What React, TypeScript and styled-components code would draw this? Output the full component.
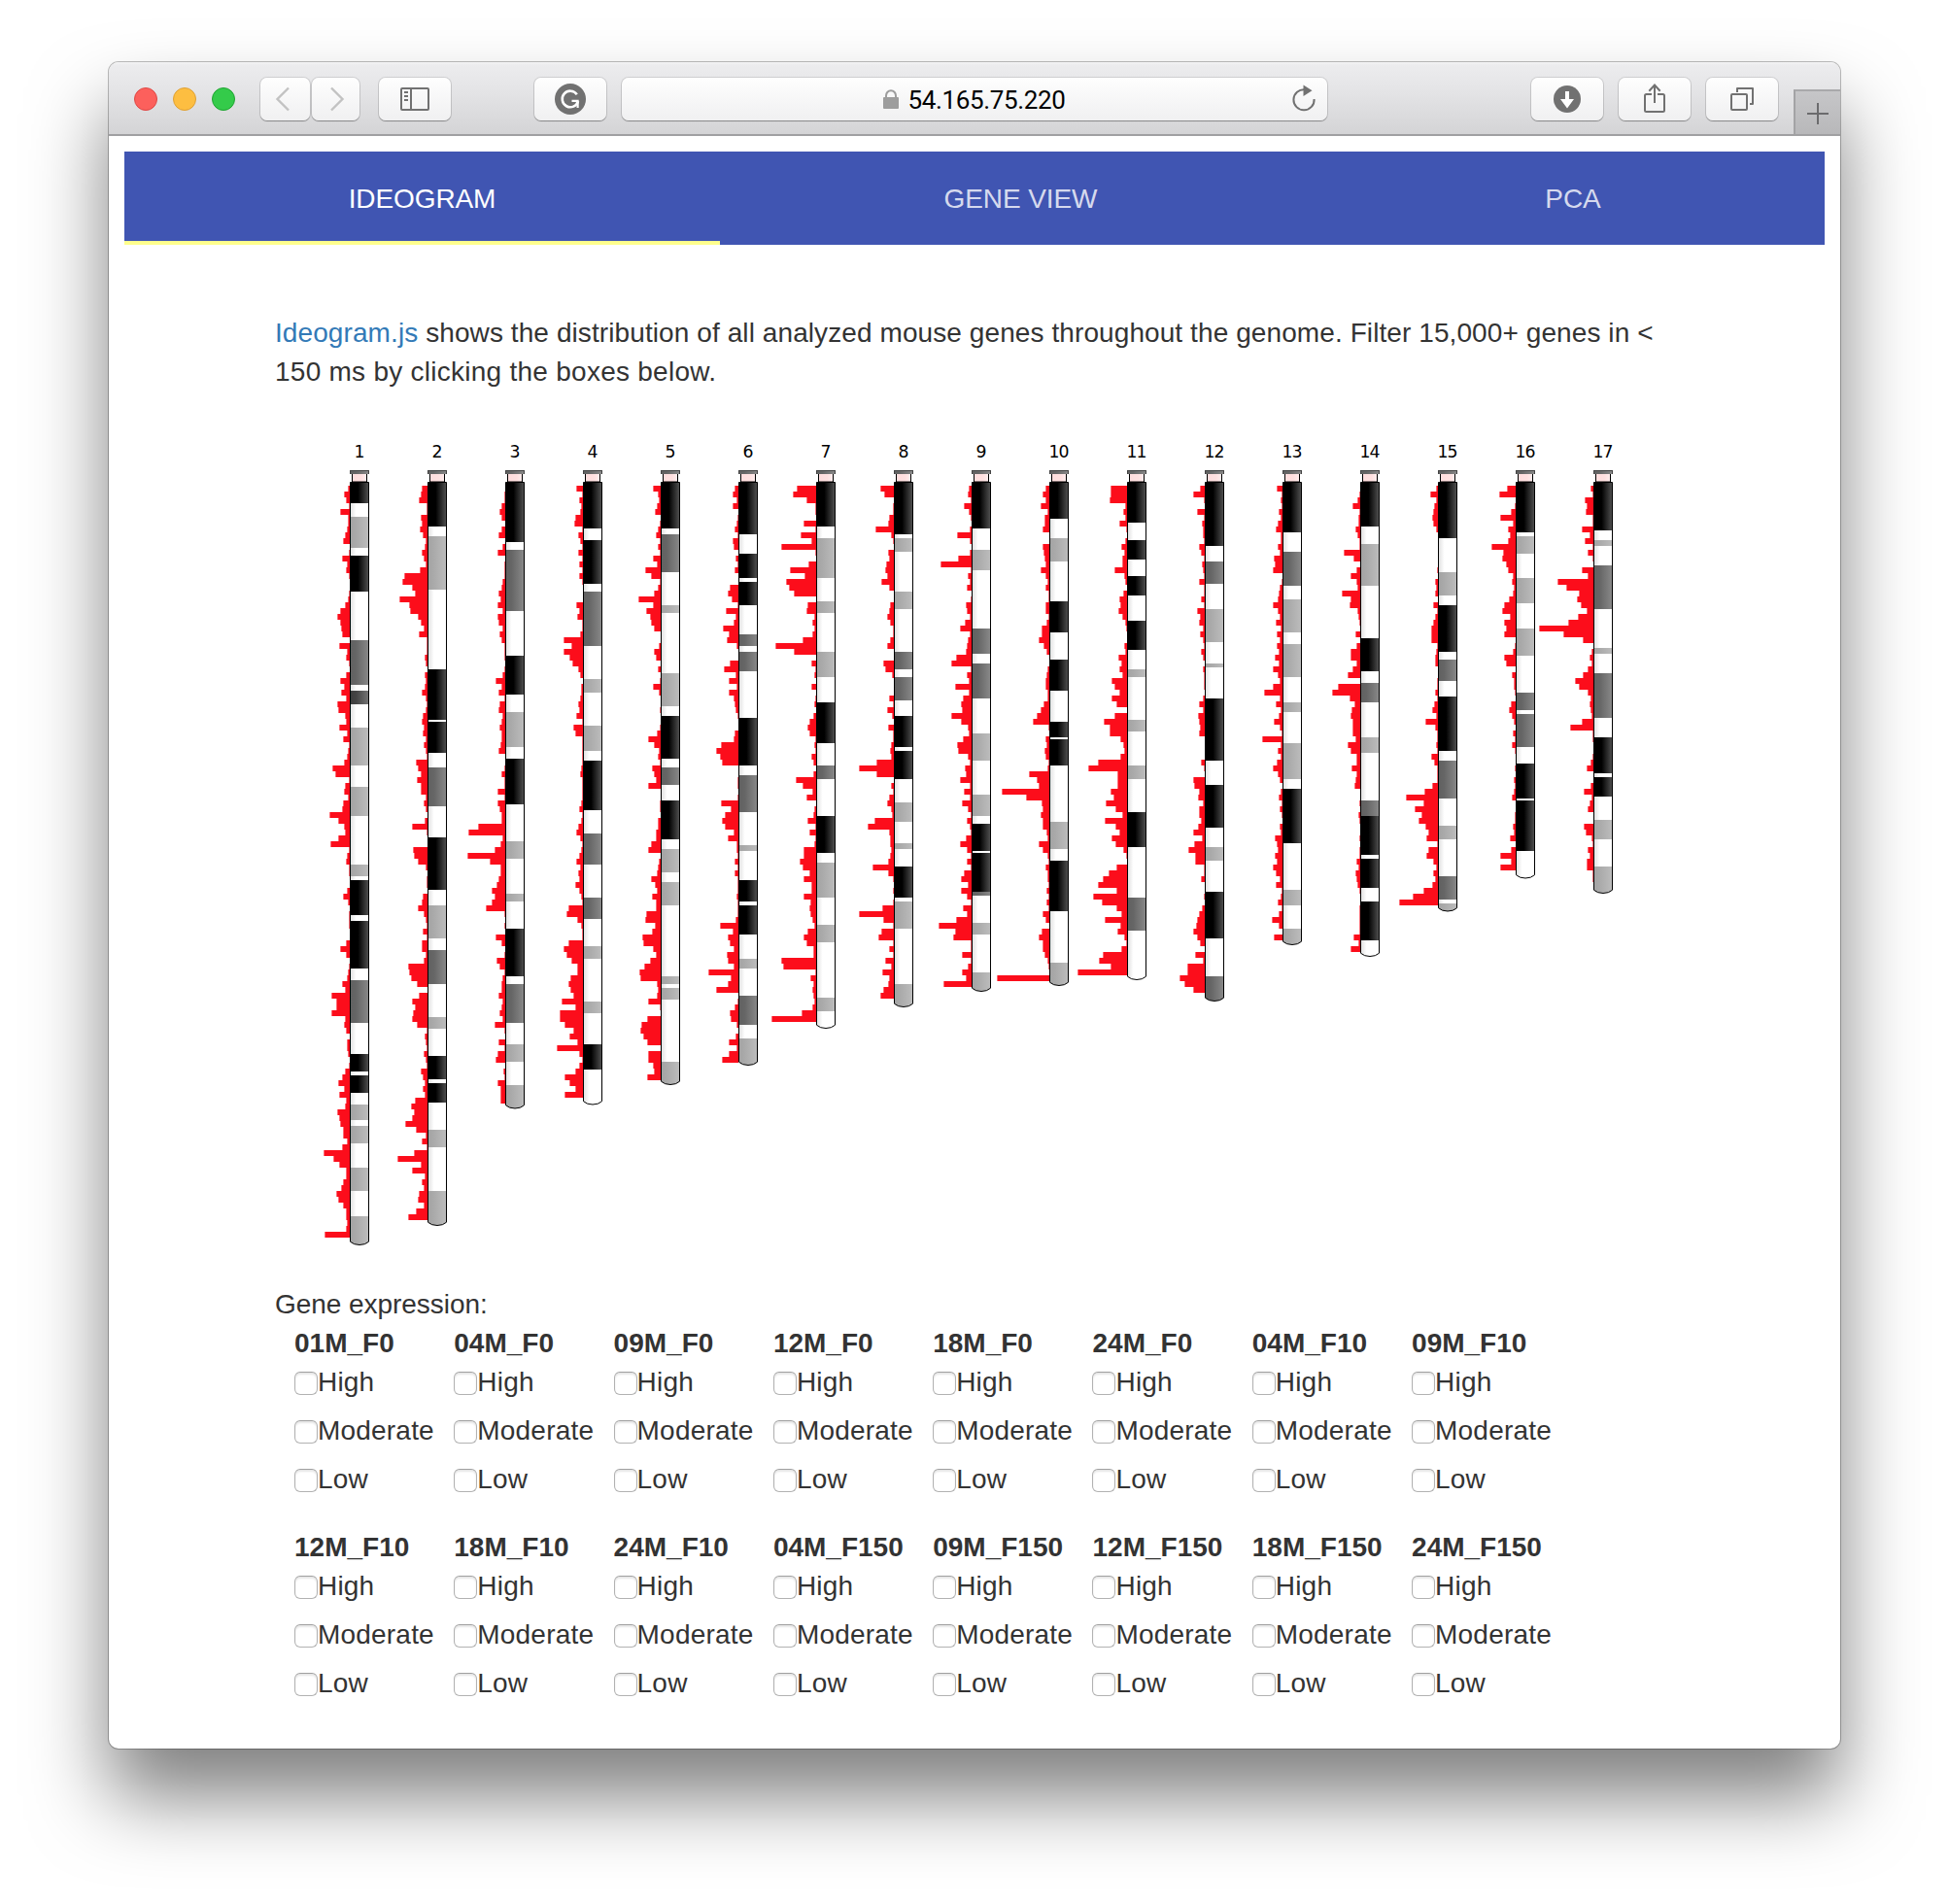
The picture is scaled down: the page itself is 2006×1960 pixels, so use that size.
import React from "react";
import styled, { createGlobalStyle } from "styled-components";

const GlobalStyle = createGlobalStyle`
  *, *::before, *::after { box-sizing: border-box; }
  html, body { margin: 0; padding: 0; background: #fff; overflow: hidden; }
`;

/* ---------- chromosome data ---------- */

type Chromosome = {
  name: string;
  /* band coordinates per pixel */
  scale: number;
  start: number;
  /* stain letter followed by the coordinate where the band ends */
  bands: string;
  /* gene counts in consecutive bins */
  genes: string;
};

const CHROMOSOMES: Chromosome[] = [
  {
    name: "1", scale: 3, start: 168,
    bands: "k234 w276 g372 w396 k507 w657 m795 w813 d855 w927 g1044 w1110 g1200 w1350 g1386 w1398 k1506 w1524 k1671 w1707 m1839 w1935 k1989 w2001 k2055 w2091 g2139 w2157 g2211 w2286 g2358 w2436 g2525",
    genes: "2 6 4 1 10 2 2 3 5 7 0 1 8 3 4 1 0 0 1 2 5 10 13 10 9 8 0 11 3 4 1 0 4 10 6 9 4 13 12 5 4 11 3 7 1 2 3 6 18 15 1 5 6 2 7 8 21 12 6 5 12 20 1 3 4 1 1 0 0 3 7 2 0 1 1 1 0 0 4 10 4 0 1 2 3 8 5 19 14 14 19 5 6 4 0 3 3 2 0 1 5 8 12 6 11 4 5 13 11 10 7 7 3 8 27 17 11 4 4 7 9 14 12 7 4 4 3 4 26",
  },
  {
    name: "2", scale: 3, start: 168,
    bands: "k306 w336 g501 w747 k903 w909 k1005 w1050 m1170 w1266 k1428 w1476 g1578 w1614 m1719 w1821 g1857 w1941 k2013 w2025 k2085 w2169 g2223 w2358 g2465",
    genes: "6 7 9 1 1 7 6 8 5 2 3 6 4 2 8 24 26 16 13 29 19 18 10 7 4 9 1 1 1 3 2 0 3 2 3 6 2 1 2 5 6 4 5 2 4 2 1 12 10 7 11 7 7 2 4 2 0 3 16 1 0 0 15 14 10 2 0 1 1 0 5 6 10 4 2 1 5 1 6 6 2 4 20 19 17 11 0 9 16 13 15 16 11 1 3 2 1 4 2 1 7 5 3 5 3 13 17 14 16 23 12 2 6 1 14 31 7 16 3 6 4 9 10 4 12 20",
  },
  {
    name: "3", scale: 3, start: 168,
    bands: "k354 w378 m567 w705 k825 w879 g987 w1023 k1164 w1278 g1332 w1440 g1464 w1548 k1695 w1719 m1839 w1905 g1959 w2031 g2103",
    genes: "0 1 1 4 6 4 0 4 7 0 3 8 0 1 1 1 3 4 7 5 8 3 8 7 3 6 4 1 1 1 0 1 3 10 4 7 1 6 7 3 4 6 4 4 5 7 0 0 1 4 1 1 8 1 8 6 4 4 28 38 3 5 11 39 16 5 5 7 9 14 11 14 20 1 0 1 0 10 4 0 1 9 6 1 3 4 4 7 3 4 6 3 11 1 0 7 1 8 10 0 2 1 8 5 5 5",
  },
  {
    name: "4", scale: 3, start: 168,
    bands: "k312 w348 k483 w507 m675 w777 g819 w921 g999 w1029 k1182 w1254 m1350 w1452 m1518 w1602 g1641 w1773 g1809 w1905 k1983 w2091",
    genes: "7 1 4 2 3 8 9 1 5 3 1 5 1 4 1 4 1 0 0 0 7 4 6 1 1 3 20 12 20 14 11 5 3 0 2 2 3 5 4 7 1 10 8 1 1 1 1 1 2 3 1 1 1 1 2 4 1 2 5 7 3 1 2 4 7 3 5 4 8 4 2 1 15 17 6 2 1 1 15 20 17 12 6 6 13 15 13 10 22 8 24 24 19 10 14 6 27 4 1 4 8 19 14 8 19",
  },
  {
    name: "5", scale: 2.24, start: 126,
    bands: "k233 w246 m334 w410 g428 w567 g643 w665 k764 w784 m824 w860 k950 w972 g1026 w1048 g1102 w1266 g1284 w1292 g1319 w1463 g1515",
    genes: "8 3 2 4 6 0 1 3 5 1 3 1 8 4 16 10 1 3 7 23 8 15 11 10 7 0 0 2 7 5 0 3 0 1 8 2 0 0 1 0 0 1 4 13 7 2 3 1 9 7 5 13 0 0 1 1 0 3 3 5 5 10 13 0 2 3 4 10 6 4 9 5 5 15 16 6 9 19 18 8 5 11 17 22 21 4 3 4 13 1 0 14 20 21 18 14 0 13 13 8 7 14",
  },
  {
    name: "6", scale: 2.24, start: 126,
    bands: "k246 w291 k347 w356 k410 w477 m504 w517 m562 w670 k780 w802 m887 w963 g977 w1044 k1093 w1102 k1169 w1225 g1248 w1310 m1378 w1409 g1471",
    genes: "4 6 2 6 0 1 2 4 1 6 5 0 3 1 4 0 0 9 11 7 1 13 3 5 16 10 12 2 0 0 9 15 3 10 2 10 5 4 3 1 0 0 4 5 18 23 19 17 0 0 1 1 0 1 18 8 14 17 14 5 11 2 2 1 4 1 4 1 1 1 2 1 1 1 3 19 6 11 9 5 12 11 5 31 8 11 23 0 1 4 9 8 2 0 3 10 2 10 17",
  },
  {
    name: "7", scale: 2.24, start: 126,
    bands: "k228 w255 g347 w401 g428 w517 g576 w634 k728 w780 m811 w896 k981 w1004 g1084 w1147 g1187 w1315 g1346 w1386",
    genes: "20 24 10 1 1 0 13 1 16 5 36 1 0 8 27 12 31 28 23 0 9 10 2 4 2 4 14 42 23 0 5 1 2 0 5 0 1 2 0 3 7 9 7 1 2 1 5 3 0 3 21 14 4 10 0 2 3 9 1 7 1 2 13 13 17 14 7 13 5 5 13 6 7 6 4 2 9 13 10 3 3 36 34 1 6 3 4 3 2 4 15 46",
  },
  {
    name: "8", scale: 2.24, start: 126,
    bands: "k246 w255 g287 w379 g419 w517 m558 w576 m629 w665 k737 w746 k811 w865 g909 w959 g972 w1012 k1084 w1093 g1156 w1284 g1336",
    genes: "14 10 0 1 1 5 6 19 3 1 0 6 5 8 9 7 13 5 0 0 4 5 7 4 1 1 4 7 0 0 11 9 2 0 0 0 5 1 7 2 0 6 1 1 3 4 3 18 36 18 0 3 1 5 7 3 2 20 27 5 4 4 3 4 6 22 6 1 0 1 0 1 12 36 11 1 13 16 1 5 1 9 3 12 5 6 11 14",
  },
  {
    name: "9", scale: 2.24, start: 126,
    bands: "k233 w282 g329 w464 m522 w544 m625 w706 g768 w847 g896 w914 k977 w981 k1071 m1080 w1142 g1169 w1257 g1300",
    genes: "3 4 1 8 3 1 0 2 15 2 0 2 14 32 1 4 2 5 0 1 6 5 2 7 12 2 4 5 6 16 21 1 5 3 17 3 9 11 10 21 11 4 3 9 15 14 4 2 7 6 12 2 8 2 10 4 1 5 2 1 6 12 5 1 5 1 8 11 4 11 5 1 9 5 16 34 17 19 1 1 10 1 4 10 6 29",
  },
  {
    name: "10", scale: 2.6133, start: 147,
    bands: "k246 w298 g361 w468 k551 w625 k708 w792 k834 w839 k909 w1061 g1134 w1166 k1301 w1440 g1501",
    genes: "4 7 4 9 2 5 5 7 0 0 7 6 5 4 9 4 2 4 1 1 4 4 1 3 8 8 11 6 3 0 0 2 3 4 4 2 2 6 9 13 17 1 0 4 3 5 4 1 2 21 13 11 49 24 8 7 9 7 7 3 2 11 7 2 1 4 2 2 1 3 1 3 1 7 4 0 8 11 7 7 5 2 1 0 54",
  },
  {
    name: "11", scale: 2.6133, start: 147,
    bands: "k256 w303 k355 w400 k452 w520 k598 w651 g672 w787 g818 w909 g946 w1035 k1129 w1265 m1354 w1486",
    genes: "17 17 18 2 4 2 8 1 0 2 6 3 5 5 13 3 2 0 4 8 7 9 5 2 1 0 0 3 2 9 6 8 5 16 13 8 16 11 0 13 24 18 18 7 4 3 7 30 40 10 10 10 17 14 22 12 5 23 12 8 16 12 4 1 0 11 19 25 30 11 35 26 11 6 23 7 10 3 1 6 25 29 17 51",
  },
  {
    name: "12", scale: 2.6133, start: 147,
    bands: "k319 w361 m421 w489 g578 w635 g645 w729 k896 w962 k1077 w1129 g1166 w1249 k1375 w1477 m1543",
    genes: "5 12 1 0 8 1 3 2 2 1 6 4 1 3 2 1 6 1 1 4 1 8 5 6 2 5 2 1 4 2 0 2 1 1 1 0 2 6 2 7 6 5 6 0 0 0 0 4 1 0 12 11 6 7 2 6 6 4 7 12 3 11 17 10 10 1 1 4 0 0 1 0 3 6 8 9 12 8 5 0 10 2 18 18 26 21 12",
  },
  {
    name: "13", scale: 2.6133, start: 147,
    bands: "k282 w335 m426 w463 g551 w583 g672 w740 g766 w849 g946 w972 k1119 w1244 g1286 w1348 g1391",
    genes: "6 1 2 1 4 2 5 7 2 2 5 3 9 8 10 0 1 3 4 5 10 5 3 7 2 6 3 6 4 8 4 10 5 3 10 19 3 7 2 4 9 3 1 21 2 5 2 6 10 5 3 0 2 4 1 3 1 0 3 2 8 6 5 8 6 10 7 3 7 1 2 5 1 4 11 4 0 9",
  },
  {
    name: "14", scale: 2.8, start: 158,
    bands: "k286 w336 g456 w608 k703 w736 m792 w893 g938 w1075 m1120 k1232 w1243 k1327 w1366 k1478 w1524",
    genes: "0 1 3 8 1 2 2 5 3 1 1 17 7 0 4 10 4 3 19 10 11 3 2 1 0 5 0 4 10 10 4 8 13 0 23 29 11 6 9 10 8 8 8 5 13 10 4 4 9 4 5 6 0 0 1 0 2 1 0 0 1 0 1 1 4 2 5 4 3 1 0 0 1 1 1 1 1 7 2 10",
  },
  {
    name: "15", scale: 2.8, start: 158,
    bands: "k319 w417 g484 w512 k647 w669 m731 w776 k932 w960 m1070 w1148 g1187 w1294 m1361 w1372 g1394",
    genes: "2 8 2 4 5 6 5 2 0 0 0 0 0 0 1 0 3 2 3 0 5 1 3 5 7 7 7 1 2 3 3 0 0 1 1 3 1 4 6 2 13 3 1 1 2 1 7 4 1 1 1 6 14 33 15 24 17 20 13 10 12 1 10 12 5 2 5 3 6 15 26 40",
  },
  {
    name: "16", scale: 2.8, start: 158,
    bands: "k302 w314 g364 w434 g507 w580 g658 w764 m815 w826 m921 w969 k1070 w1075 k1221 w1299",
    genes: "9 17 0 1 5 16 3 8 6 8 25 13 14 10 8 3 4 2 3 7 12 14 6 12 10 12 0 1 3 12 10 0 4 2 2 1 0 5 7 4 2 0 3 1 4 1 0 0 1 0 2 1 2 4 0 0 1 1 3 2 6 0 5 16 5 16",
  },
  {
    name: "17", scale: 2.8, start: 158,
    bands: "k297 w325 g342 w398 m524 w636 g652 w708 m837 w893 k997 w1008 k1064 w1131 g1187 w1266 g1343",
    genes: "3 1 9 7 8 1 1 12 4 9 1 6 1 0 12 6 37 28 15 17 13 7 16 26 56 31 11 0 2 4 2 6 11 19 15 6 3 4 3 2 12 24 1 1 0 0 1 3 7 0 0 3 10 2 4 6 0 0 10 8 2 1 6 4 7 7 1 1",
  },
];

const CHR_PITCH = 80;
const CHR_LEFT = 60;
const BODY_TOP = 56;
const BIN_TOP = 60;
const BIN_HEIGHT = 6;

const STAINS: Record<string, [string, string, string]> = {
  w: ["#dddddd", "#ffffff", "#ffffff"],
  g: ["#a2a2a2", "#aaaaaa", "#bdbdbd"],
  m: ["#606060", "#666666", "#8a8a8a"],
  d: ["#3c3c3c", "#444444", "#777777"],
  k: ["#000000", "#000000", "#555555"],
};

/* ---------- window chrome ---------- */

const Desktop = styled.div`
  width: 2006px;
  height: 1960px;
  padding: 64px 112px 0;
  background: #fff;
  overflow: hidden;
`;

const Window = styled.div`
  width: 1782px;
  height: 1736px;
  background: #fff;
  border-radius: 10px;
  box-shadow: 0 0 0 1px rgba(0, 0, 0, 0.26), 0 50px 80px rgba(0, 0, 0, 0.5);
`;

const Toolbar = styled.header`
  display: flex;
  align-items: flex-start;
  height: 76px;
  padding: 16px 0 0 26px;
  border-bottom: 2px solid #a0a0a2;
  border-radius: 10px 10px 0 0;
  background: linear-gradient(#f4f4f5 0, #ececee 3px, #e4e4e6 30px, #d4d4d6 100%);
`;

const Lights = styled.div`
  display: flex;
  gap: 16px;
  margin: 10px 26px 0 0;
`;

const Light = styled.span<{ $fill: string; $edge: string }>`
  width: 24px;
  height: 24px;
  border-radius: 50%;
  background: ${(p) => p.$fill};
  border: 1px solid ${(p) => p.$edge};
`;

const ToolButton = styled.button<{ $width: number; $after: number }>`
  flex: none;
  display: flex;
  align-items: center;
  justify-content: center;
  width: ${(p) => p.$width}px;
  height: 44px;
  margin: 0 ${(p) => p.$after}px 0 0;
  padding: 0;
  border: 0;
  border-radius: 7px;
  background: linear-gradient(#fefefe, #f0f0f1);
  box-shadow: 0 0 0 1px rgba(0, 0, 0, 0.11), 0 1px 1px rgba(0, 0, 0, 0.3);
`;

const AddressBar = styled.div`
  flex: none;
  display: grid;
  grid-template-columns: 48px 1fr 48px;
  align-items: center;
  width: 726px;
  height: 44px;
  margin-right: 210px;
  border-radius: 7px;
  background: linear-gradient(#fefefe, #f0f0f1);
  box-shadow: 0 0 0 1px rgba(0, 0, 0, 0.11), 0 1px 1px rgba(0, 0, 0, 0.3);
`;

const Address = styled.div`
  grid-column: 2;
  display: flex;
  align-items: center;
  justify-content: center;
  gap: 9px;
  height: 44px;
  padding-top: 2px;
  font: 400 26px/42px Roboto, "Liberation Sans", sans-serif;
  letter-spacing: -0.35px;
  color: #000;
`;

const NewTab = styled.button`
  display: flex;
  align-items: center;
  justify-content: center;
  width: 48px;
  height: 46px;
  margin: 12px 0 0;
  padding: 2px 0 0;
  border: 0;
  border-top: 2px solid #a9a9ab;
  border-left: 2px solid #a3a3a5;
  background: linear-gradient(#c6c6c8, #b8b8ba);
`;

const Icon = styled.svg`
  display: block;
  overflow: visible;
`;

const LockIcon = styled(Icon)`
  margin-top: -2px;
`;

/* ---------- page ---------- */

const Page = styled.main`
  padding: 16px;
  font: 28px/40px "Liberation Sans", Arial, sans-serif;
  color: #333;
`;

const Tabs = styled.nav`
  display: flex;
  height: 96px;
  background: #4055b2;
`;

const Tab = styled.a<{ $width: number; $active?: boolean }>`
  width: ${(p) => p.$width}px;
  padding-top: 29px;
  text-align: center;
  letter-spacing: -0.1px;
  color: ${(p) => (p.$active ? "#fff" : "rgba(255, 255, 255, 0.8)")};
  border-bottom: 4px solid ${(p) => (p.$active ? "#ffff8d" : "transparent")};
`;

const Content = styled.section`
  padding: 71px 155px 0;
`;

const Intro = styled.p`
  width: 1440px;
  margin: 0 0 37px;
  white-space: nowrap;
`;

const IntroLine = styled.span<{ $track: number }>`
  display: block;
  letter-spacing: ${(p) => p.$track}px;
`;

const Link = styled.a`
  color: #337ab7;
`;

const Chart = styled.svg`
  display: block;
  width: 1420px;
  height: 883px;
  margin-left: 17px;
`;

const ChrLabel = styled.text`
  font: 17.3px "DejaVu Sans", Verdana, sans-serif;
  letter-spacing: -1px;
  text-anchor: middle;
  fill: #000;
`;

const FilterTitle = styled.div`
  height: 40px;
  letter-spacing: -0.05px;
`;

const FilterGrid = styled.div`
  display: grid;
  grid-template-columns: repeat(8, 164.3px);
  row-gap: 20px;
  padding-left: 20px;
`;

const Group = styled.fieldset`
  margin: 0;
  padding: 0;
  border: 0;
  min-width: 0;
`;

const GroupName = styled.div`
  height: 40px;
  font-weight: 700;
`;

const Option = styled.label`
  display: flex;
  height: 40px;
  margin-bottom: 10px;
  letter-spacing: 0.2px;
`;

const Checkbox = styled.input`
  appearance: none;
  flex: none;
  width: 24px;
  height: 24px;
  margin: 9px 0 0;
  border: 1px solid #b2b2b2;
  border-top-color: #a0a0a0;
  border-radius: 6px;
  background: #fff;
  box-shadow: inset 0 2px 2px rgba(0, 0, 0, 0.1);
`;

const TISSUES = [
  "01M_F0", "04M_F0", "09M_F0", "12M_F0", "18M_F0", "24M_F0", "04M_F10", "09M_F10",
  "12M_F10", "18M_F10", "24M_F10", "04M_F150", "09M_F150", "12M_F150", "18M_F150", "24M_F150",
];
const LEVELS = ["High", "Moderate", "Low"];

function ChromosomeFigure({ chr, index }: { chr: Chromosome; index: number }) {
  let from = BODY_TOP;
  const bands = chr.bands.split(" ").map((token) => {
    const to = Math.round((Number(token.slice(1)) / chr.scale) * 2) / 2;
    const band = { stain: token[0], from, to };
    from = to;
    return band;
  });
  const end = from;
  const outline = `M.5 ${BODY_TOP + 0.5}H19.5V${end - 3.3}Q16 ${end} 10 ${end}Q4 ${end} .5 ${end - 3.3}Z`;
  const clip = `chr-clip-${chr.name}`;
  return (
    <g transform={`translate(${CHR_LEFT + index * CHR_PITCH} 0)`}>
      <ChrLabel x={9.6} y={30.6}>{chr.name}</ChrLabel>
      {chr.genes.split(" ").map((n, row) => {
        const width = Number(n) - 0.4;
        return width > 0 ? (
          <rect
            key={row}
            x={-width}
            y={BIN_TOP + row * BIN_HEIGHT}
            width={width}
            height={BIN_HEIGHT}
            fill="#fc0d1b"
          />
        ) : null;
      })}
      <rect x={2.5} y={46} width={15} height={10} fill="url(#neck)" stroke="#000" />
      <rect x={0} y={44} width={20} height={4} fill="url(#stain-m)" />
      <path d="M.5 44V48M19.5 44V48M0 44.5H20" stroke="#444" fill="none" />
      <clipPath id={clip}>
        <path d={outline} />
      </clipPath>
      <g clipPath={`url(#${clip})`}>
        {bands.map((b, i) => (
          <rect key={i} x={0} y={b.from} width={20} height={b.to - b.from} fill={`url(#stain-${b.stain})`} />
        ))}
      </g>
      <path d={outline} fill="none" stroke="#000" />
    </g>
  );
}

function Ideogram() {
  return (
    <Chart viewBox="0 0 1420 883">
      <defs>
        {Object.entries(STAINS).map(([key, [left, middle, right]]) => (
          <linearGradient key={key} id={`stain-${key}`} gradientUnits="userSpaceOnUse" x1="0" x2="20" y1="0" y2="0">
            <stop offset="0" stopColor={left} />
            <stop offset={key === "k" ? 0.42 : 0.33} stopColor={middle} />
            <stop offset="1" stopColor={right} />
          </linearGradient>
        ))}
        <linearGradient id="neck">
          <stop offset="0" stopColor="#ffdddd" />
          <stop offset="0.6" stopColor="#ffe0e0" />
          <stop offset="1" stopColor="#ffeeee" />
        </linearGradient>
      </defs>
      {CHROMOSOMES.map((chr, i) => (
        <ChromosomeFigure key={chr.name} chr={chr} index={i} />
      ))}
    </Chart>
  );
}

const INK = "#717171";

export default function App() {
  return (
    <Desktop>
      <GlobalStyle />
      <Window>
        <Toolbar>
          <Lights>
            <Light $fill="#fc605c" $edge="#de4744" />
            <Light $fill="#fdbe41" $edge="#dea034" />
            <Light $fill="#34cb4a" $edge="#1fa431" />
          </Lights>
          <ToolButton $width={51} $after={2} aria-label="Back">
            <Icon width="51" height="44" fill="none" stroke="#c2c2c2" strokeWidth="2.4">
              <path d="M29 10.5L17.5 22L29 33.5" />
            </Icon>
          </ToolButton>
          <ToolButton $width={49} $after={20} aria-label="Forward">
            <Icon width="49" height="44" fill="none" stroke="#c2c2c2" strokeWidth="2.4">
              <path d="M20 10.5L31.5 22L20 33.5" />
            </Icon>
          </ToolButton>
          <ToolButton $width={74} $after={86} aria-label="Sidebar">
            <Icon width="74" height="44" fill="none" stroke={INK} strokeWidth="2">
              <rect x="23" y="11" width="28" height="22" rx="1" />
              <path d="M33 11V33M26 15H30M26 19H30M26 23H30" />
            </Icon>
          </ToolButton>
          <ToolButton $width={74} $after={16} aria-label="Grammarly">
            <Icon width="74" height="44">
              <circle cx="37" cy="22" r="16" fill={INK} />
              <path d="M43.8 17.2A8.3 8.3 0 1 0 45 24.2" fill="none" stroke="#fff" strokeWidth="2.6" />
              <path d="M38.5 23.8H44.6V31" fill="none" stroke="#fff" strokeWidth="2.2" />
            </Icon>
          </ToolButton>
          <AddressBar>
            <Address>
              <LockIcon width="16" height="20">
                <rect x="0" y="8" width="16" height="12" rx="1" fill="#9d9d9d" />
                <path d="M3 9V6.5A5 5.3 0 0 1 13 6.5V9" fill="none" stroke="#9d9d9d" strokeWidth="2" />
              </LockIcon>
              54.165.75.220
            </Address>
            <Icon width="48" height="44">
              <path d="M34.6 22A10.6 10.6 0 1 1 25 12.2" fill="none" stroke={INK} strokeWidth="2" />
              <path d="M23.5 7.5L32.5 13.2L23.5 19Z" fill={INK} />
            </Icon>
          </AddressBar>
          <ToolButton $width={74} $after={16} aria-label="Downloads">
            <Icon width="74" height="44">
              <circle cx="37" cy="22" r="14" fill={INK} />
              <path d="M35 14H39V22H44L37 31.5L30 22H35Z" fill="#fff" />
            </Icon>
          </ToolButton>
          <ToolButton $width={74} $after={16} aria-label="Share">
            <Icon width="74" height="44" fill="none" stroke={INK} strokeWidth="2">
              <path d="M34 17H28.5Q27 17 27 18.5V33.5Q27 35 28.5 35H45.5Q47 35 47 33.5V18.5Q47 17 45.5 17H40M37 26V8M31.3 13.7L37 7.5L42.7 13.7" />
            </Icon>
          </ToolButton>
          <ToolButton $width={74} $after={16} aria-label="Show tabs">
            <Icon width="74" height="44" fill="none" stroke={INK} strokeWidth="2">
              <rect x="26" y="17" width="16" height="16" rx="1" />
              <path d="M32 15V11H48V27H45" strokeLinejoin="round" />
            </Icon>
          </ToolButton>
          <NewTab aria-label="New tab">
            <Icon width="22" height="22" stroke="#6b6b6d" strokeWidth="2">
              <path d="M11 0V22M0 11H22" />
            </Icon>
          </NewTab>
        </Toolbar>
        <Page>
          <Tabs>
            <Tab $width={613} $active>IDEOGRAM</Tab>
            <Tab $width={619}>GENE VIEW</Tab>
            <Tab $width={518}>PCA</Tab>
          </Tabs>
          <Content>
            <Intro>
              <IntroLine $track={0.09}>
                <Link>Ideogram.js</Link> shows the distribution of all analyzed mouse genes throughout the genome. Filter 15,000+ genes in &lt;
              </IntroLine>
              <IntroLine $track={0.26}>150 ms by clicking the boxes below.</IntroLine>
            </Intro>
            <Ideogram />
            <FilterTitle>Gene expression:</FilterTitle>
            <FilterGrid>
              {TISSUES.map((tissue) => (
                <Group key={tissue}>
                  <GroupName>{tissue}</GroupName>
                  {LEVELS.map((level) => (
                    <Option key={level}>
                      <Checkbox type="checkbox" />
                      {level}
                    </Option>
                  ))}
                </Group>
              ))}
            </FilterGrid>
          </Content>
        </Page>
      </Window>
    </Desktop>
  );
}
